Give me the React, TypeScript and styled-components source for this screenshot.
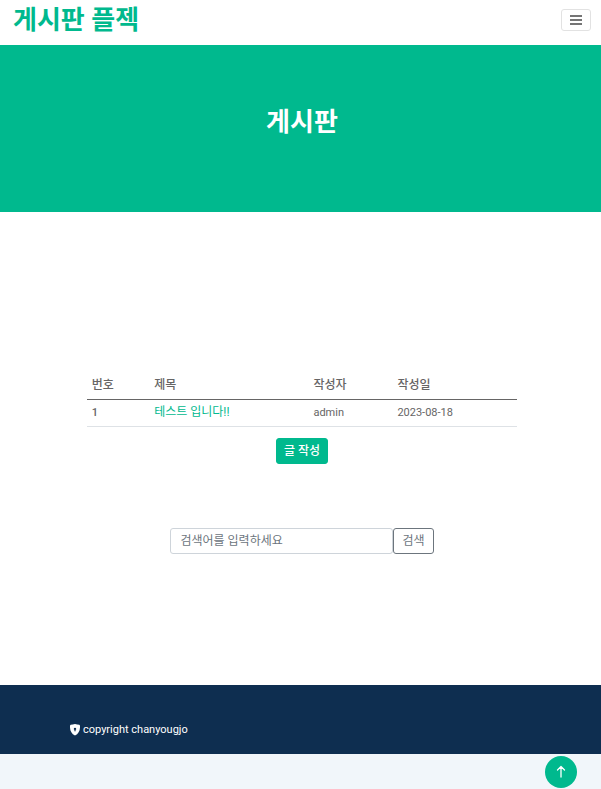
import React from "react";
import styled, { createGlobalStyle } from "styled-components";

const green = "#00b98e";
const navy = "#0e2e50";
const gray = "#666565";

const GlobalStyle = createGlobalStyle`
  *, *::before, *::after { box-sizing: border-box; }
  body {
    margin: 0;
    background: #fff;
    color: ${gray};
    font-family: Roboto, "Noto Sans CJK KR", sans-serif;
    font-size: 11px;
    line-height: 16px;
  }
  button, input { font: inherit; }
  a { color: ${green}; text-decoration: none; }
`;

const Page = styled.div`
  min-height: 100vh;
  display: flex;
  flex-direction: column;
`;

const NavBar = styled.header`
  display: flex;
  align-items: center;
  justify-content: space-between;
  height: 45px;
  padding: 0 10px 6px 13px;
`;

const Brand = styled.a`
  font-size: 26px;
  line-height: 32px;
  font-weight: 700;
`;

const MenuButton = styled.button`
  display: flex;
  align-items: center;
  justify-content: center;
  width: 30px;
  height: 22px;
  padding: 0;
  border: 1px solid #e2e2e2;
  border-radius: 3px;
  background: #fff;
  color: #757575;
`;

const Hero = styled.section`
  display: flex;
  justify-content: center;
  padding: 61px 12px 74px 15px;
  background: ${green};
`;

const HeroTitle = styled.h1`
  margin: 0;
  color: #fff;
  font-size: 26px;
  line-height: 32px;
  font-weight: 700;
`;

const Board = styled.main`
  display: flex;
  flex-direction: column;
  align-items: center;
  padding: 157px 0 131px 3px;
`;

const PostTable = styled.table`
  width: 72%;
  border-collapse: collapse;
  table-layout: fixed;
`;

const Column = styled.col<{ $share: number }>`
  width: ${({ $share }) => $share}%;
`;

const HeadCell = styled.th`
  padding: 8px 5px 6px;
  border-bottom: 1px solid ${gray};
  font-size: 12px;
  font-weight: 500;
  text-align: left;
`;

const Cell = styled.td`
  padding: 5px;
  border-bottom: 1px solid #dee2e6;
`;

const IdCell = styled(HeadCell)`
  padding: 5px;
  border-bottom-color: #dee2e6;
  font-size: 11px;
`;

const PostLink = styled.a`
  font-size: 12px;
  line-height: 14px;
`;

const WriteButton = styled.button`
  margin-top: 11px;
  padding: 4px 7px;
  border: 1px solid ${green};
  border-radius: 3px;
  background: ${green};
  color: #fff;
  font-size: 12px;
  font-weight: 500;
`;

const SearchForm = styled.form`
  display: flex;
  width: 44%;
  margin-top: 64px;
`;

const SearchInput = styled.input`
  flex: 1;
  min-width: 0;
  padding: 4px 9px;
  border: 1px solid #ced4da;
  border-radius: 3px;
  color: ${gray};
  font-size: 12px;
  &::placeholder { color: #6c757d; opacity: 1; }
`;

const SearchButton = styled.button`
  padding: 4px 8px;
  border: 1px solid #6c757d;
  border-radius: 3px;
  background: #fff;
  color: #6c757d;
  font-size: 12px;
`;

const Footer = styled.footer`
  padding: 37px 70px 16px;
  background: ${navy};
  color: #fff;
`;

const Copyright = styled.div`
  display: flex;
  align-items: center;
  gap: 3px;
`;

const BottomStrip = styled.div`
  flex: 1;
  min-height: 35px;
  background: #f1f6fa;
`;

const BackToTop = styled.a`
  position: fixed;
  right: 24px;
  bottom: 1px;
  display: flex;
  align-items: center;
  justify-content: center;
  width: 32px;
  height: 32px;
  border-radius: 50%;
  background: ${green};
  color: #fff;
`;

const MenuIcon = () => (
  <svg width="12" height="10" viewBox="0 0 12 10" fill="currentColor" aria-hidden="true">
    <path d="M0 0h12v2H0zM0 4h12v2H0zM0 8h12v2H0z" />
  </svg>
);

const ShieldIcon = () => (
  <svg width="10" height="12" viewBox="0 0 10 12" aria-hidden="true">
    <path
      fill="#fff"
      fillRule="evenodd"
      d="M5 0C6.500.4 8 .4 9.300.8Q10 1.100 10 2C10.200 6.500 8.600 9.800 5 11.500C1.400 9.800-.2 6.500 0 2Q0 1.100.7.8C2 .4 3.500.4 5 0ZM5 3.700A1.200 1.200 0 0 0 4.500 6L4.300 7.200H5.700L5.500 6A1.200 1.200 0 0 0 5 3.700Z"
    />
  </svg>
);

const ArrowUpIcon = () => (
  <svg width="10" height="14" viewBox="0 0 10 14" fill="none" stroke="currentColor" strokeWidth="1.300" strokeLinecap="round" strokeLinejoin="round" aria-hidden="true">
    <path d="M5 12V1.500M1.500 5 5 1.500 8.500 5" />
  </svg>
);

const posts = [{ id: 1, title: "테스트 입니다!!", author: "admin", date: "2023-08-18" }];

export default function App() {
  return (
    <Page id="top">
      <GlobalStyle />
      <NavBar>
        <Brand href="#top">게시판 플젝</Brand>
        <MenuButton type="button" aria-label="메뉴">
          <MenuIcon />
        </MenuButton>
      </NavBar>
      <Hero>
        <HeroTitle>게시판</HeroTitle>
      </Hero>
      <Board>
        <PostTable>
          <colgroup>
            <Column $share={14.5} />
            <Column $share={37} />
            <Column $share={19.5} />
            <Column $share={29} />
          </colgroup>
          <thead>
            <tr>
              <HeadCell scope="col">번호</HeadCell>
              <HeadCell scope="col">제목</HeadCell>
              <HeadCell scope="col">작성자</HeadCell>
              <HeadCell scope="col">작성일</HeadCell>
            </tr>
          </thead>
          <tbody>
            {posts.map((post) => (
              <tr key={post.id}>
                <IdCell as="th" scope="row">{post.id}</IdCell>
                <Cell>
                  <PostLink href="#post">{post.title}</PostLink>
                </Cell>
                <Cell>{post.author}</Cell>
                <Cell>{post.date}</Cell>
              </tr>
            ))}
          </tbody>
        </PostTable>
        <WriteButton type="button">글 작성</WriteButton>
        <SearchForm onSubmit={(event) => event.preventDefault()}>
          <SearchInput type="text" aria-label="검색어" placeholder="검색어를 입력하세요" />
          <SearchButton type="submit">검색</SearchButton>
        </SearchForm>
      </Board>
      <Footer>
        <Copyright>
          <ShieldIcon />
          copyright chanyougjo
        </Copyright>
      </Footer>
      <BottomStrip />
      <BackToTop href="#top" aria-label="맨 위로">
        <ArrowUpIcon />
      </BackToTop>
    </Page>
  );
}
